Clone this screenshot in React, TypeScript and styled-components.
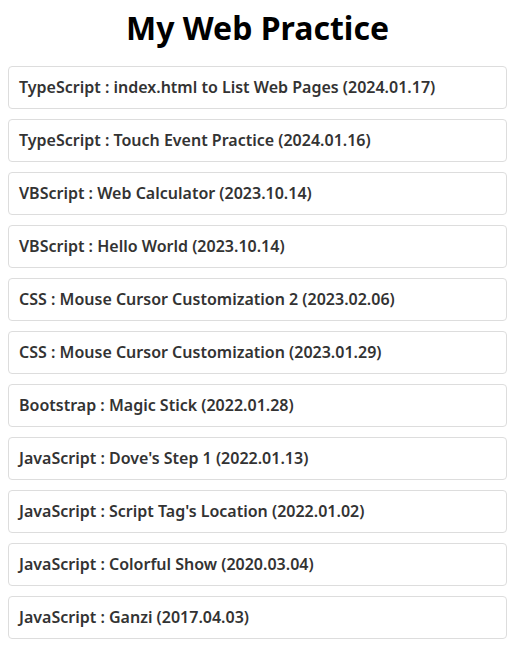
import { createGlobalStyle } from "styled-components";
import { styled } from "styled-components";

const GlobalStyle = createGlobalStyle`
    body {
        margin: 0;
        background: #fff;
        font-family: "Noto Sans", "Noto Sans CJK KR", sans-serif;
    }
`;

const items = [
    "TypeScript : index.html to List Web Pages (2024.01.17)",
    "TypeScript : Touch Event Practice (2024.01.16)",
    "VBScript : Web Calculator (2023.10.14)",
    "VBScript : Hello World (2023.10.14)",
    "CSS : Mouse Cursor Customization 2 (2023.02.06)",
    "CSS : Mouse Cursor Customization (2023.01.29)",
    "Bootstrap : Magic Stick (2022.01.28)",
    "JavaScript : Dove's Step 1 (2022.01.13)",
    "JavaScript : Script Tag's Location (2022.01.02)",
    "JavaScript : Colorful Show (2020.03.04)",
    "JavaScript : Ganzi (2017.04.03)",
];

const App = () => {
    return (
        <>
            <GlobalStyle />
            <Page>
                <Title>My Web Practice</Title>
                <List>
                    {items.map((item) => (
                        <Card key={item}>{item}</Card>
                    ))}
                </List>
            </Page>
        </>
    );
};

export default App;

const Page = styled.div`
    padding: 0 12px 0 8px;
`;

const Title = styled.h1`
    margin: 4px 0 14px;
    font-size: 32px;
    line-height: 48px;
    font-weight: 700;
    text-align: center;
    color: #000;
`;

const List = styled.div`
    display: flex;
    flex-direction: column;
    gap: 10px;
`;

const Card = styled.div`
    border: 1px solid #dddddd;
    border-radius: 4px;
    padding: 10px;
    font-size: 16px;
    line-height: 21px;
    font-weight: 600;
    color: #333;
`;
